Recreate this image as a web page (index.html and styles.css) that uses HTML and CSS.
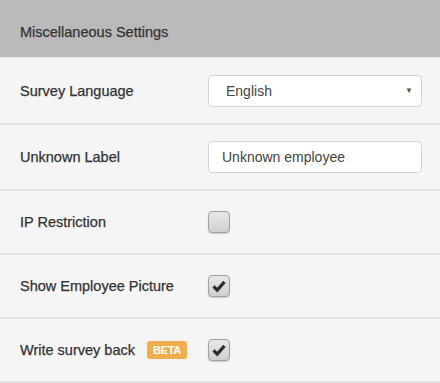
FILE: index.html
```html
<!DOCTYPE html>
<html lang="en">
<head>
  <meta charset="UTF-8">
  <title>Miscellaneous Settings</title>
  <link rel="stylesheet" href="styles.css">
</head>
<body>

  <div class="panel">
    <div class="panel-heading">Miscellaneous Settings</div>

    <div class="row row-tall">
      <label class="row-label">Survey Language</label>
      <div class="select">
        <span>English</span>
        <span class="caret">&#9660;</span>
      </div>
    </div>

    <div class="row row-input">
      <label class="row-label">Unknown Label</label>
      <input class="text-input" type="text" value="Unknown employee">
    </div>

    <div class="row">
      <label class="row-label">IP Restriction</label>
      <span class="check"></span>
    </div>

    <div class="row">
      <label class="row-label">Show Employee Picture</label>
      <span class="check">
        <svg viewBox="0 0 22 22" width="22" height="22"><path d="M5 11.5 L9 15.5 L17 6.5" fill="none" stroke="#2e2e2e" stroke-width="3.6" stroke-linecap="butt" stroke-linejoin="miter"/></svg>
      </span>
    </div>

    <div class="row">
      <label class="row-label">Write survey back <span class="badge">BETA</span></label>
      <span class="check">
        <svg viewBox="0 0 22 22" width="22" height="22"><path d="M5 11.5 L9 15.5 L17 6.5" fill="none" stroke="#2e2e2e" stroke-width="3.6" stroke-linecap="butt" stroke-linejoin="miter"/></svg>
      </span>
    </div>
  </div>

</body>
</html>
```

FILE: styles.css
```css
body {
  margin: 0;
  font-family: 'Liberation Sans', Arial, sans-serif;
  font-size: 14.5px;
  color: #333;
  background: #f5f5f5;
}

.panel {
  background: #f5f5f5;
}

.panel-heading {
  background: #bababa;
  height: 57px;
  line-height: 64px;
  padding-left: 20px;
  border-bottom: 1px solid #e6e6e6;
  -webkit-text-stroke: 0.25px #333;
}

.row {
  display: flex;
  align-items: center;
  height: 62px;
  padding: 0 18px 0 20px;
  border-bottom: 2px solid #e2e2e2;
}

.row-tall {
  height: 65px;
}

.row-input {
  height: 64px;
}

.row-label {
  width: 188px;
  flex-shrink: 0;
  display: flex;
  align-items: center;
  -webkit-text-stroke: 0.25px #333;
}

.select,
.text-input {
  flex: 1;
  box-sizing: border-box;
  height: 32px;
  background: #fff;
  border: 1px solid #d4d4d4;
  border-radius: 4px;
  font-family: inherit;
  font-size: 14px;
  color: #444;
}

.select {
  display: flex;
  align-items: center;
  justify-content: space-between;
  padding: 0 8px 0 17px;
}

.caret {
  font-size: 8px;
  color: #555;
}

.text-input {
  padding: 0 13px;
  outline: none;
}

.check {
  box-sizing: border-box;
  width: 22px;
  height: 22px;
  border: 1px solid #a0a0a0;
  border-radius: 4px;
  background: linear-gradient(#e8e8e8, #d0d0d0);
  box-shadow: 0 1px 1px rgba(0, 0, 0, 0.15);
  display: flex;
  align-items: center;
  justify-content: center;
}

.check svg {
  display: block;
}

.badge {
  margin-left: 12px;
  background: #f0ad4e;
  color: #fff;
  font-size: 11px;
  font-weight: bold;
  padding: 3px 6px;
  border-radius: 3px;
  letter-spacing: -0.3px;
  -webkit-text-stroke: 0;
}
```
